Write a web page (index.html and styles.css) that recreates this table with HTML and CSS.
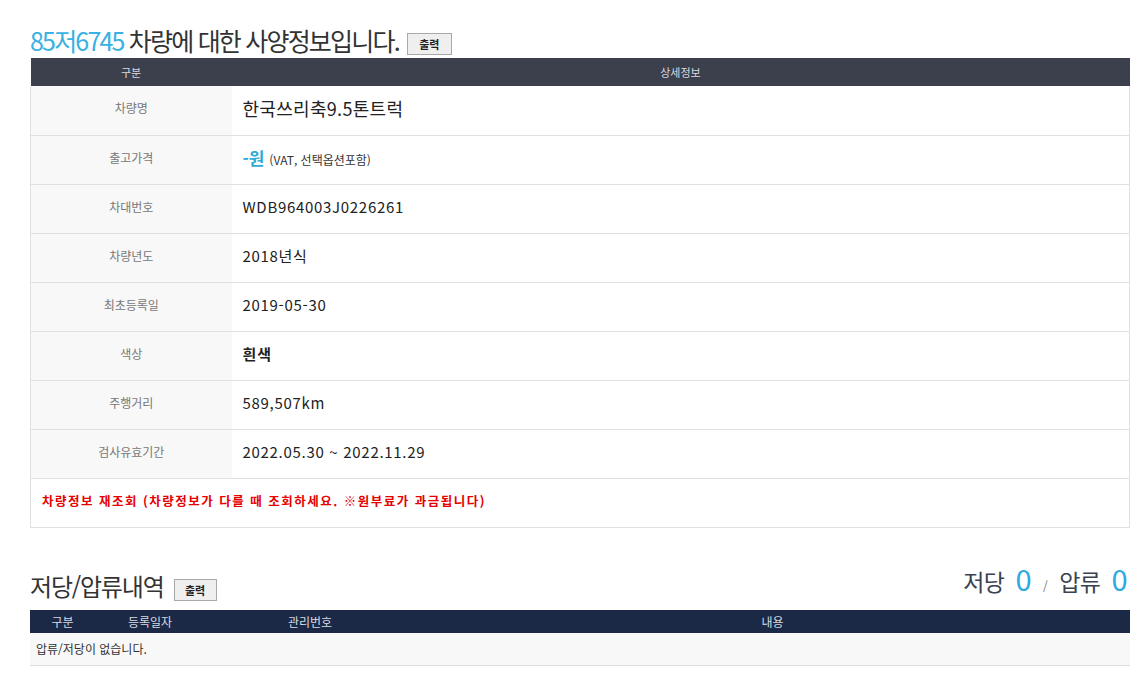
FILE: index.html
```html
<!DOCTYPE html>
<html lang="ko">
<head>
<meta charset="utf-8">
<link rel="stylesheet" href="styles.css">
</head>
<body>
<div class="wrap">
  <div class="title-row">
    <h1 class="title"><span class="plate">85저6745</span> 차량에 대한 사양정보입니다.</h1>
    <button class="print-btn">출력</button>
  </div>
  <table class="spec">
    <thead>
      <tr><th class="col-label">구분</th><th>상세정보</th></tr>
    </thead>
    <tbody>
      <tr><td class="label">차량명</td><td class="value name">한국쓰리축9.5톤트럭</td></tr>
      <tr><td class="label">출고가격</td><td class="value"><span class="price">-원</span> <span class="vat">(VAT, 선택옵션포함)</span></td></tr>
      <tr><td class="label">차대번호</td><td class="value">WDB964003J0226261</td></tr>
      <tr><td class="label">차량년도</td><td class="value">2018년식</td></tr>
      <tr><td class="label">최초등록일</td><td class="value">2019-05-30</td></tr>
      <tr><td class="label">색상</td><td class="value bold">흰색</td></tr>
      <tr><td class="label">주행거리</td><td class="value">589,507km</td></tr>
      <tr><td class="label">검사유효기간</td><td class="value">2022.05.30 ~ 2022.11.29</td></tr>
      <tr><td class="notice" colspan="2">차량정보 재조회 (차량정보가 다를 때 조회하세요. ※원부료가 과금됩니다)</td></tr>
    </tbody>
  </table>

  <div class="sec-row">
    <div class="sec-left">
      <h2 class="sec-title">저당/압류내역</h2>
      <button class="print-btn small">출력</button>
    </div>
    <div class="stats">저당 <span class="num">0</span> <span class="slash">/</span> 압류 <span class="num">0</span></div>
  </div>
  <table class="lien">
    <thead>
      <tr><th class="c1">구분</th><th class="c2">등록일자</th><th class="c3">관리번호</th><th>내용</th></tr>
    </thead>
    <tbody>
      <tr><td colspan="4" class="empty">압류/저당이 없습니다.</td></tr>
    </tbody>
  </table>
</div>
</body>
</html>
```

FILE: styles.css
```css
* { box-sizing: border-box; }
body {
  margin: 0;
  background: #fff;
  font-family: "Noto Sans CJK KR", "Noto Sans", sans-serif;
  color: #333;
}
.wrap {
  width: 1100px;
  margin-left: 30px;
  padding-top: 16px;
}
.title-row {
  display: flex;
  align-items: flex-end;
  gap: 8px;
  height: 42px;
}
.title {
  margin: 0;
  font-size: 25px;
  font-weight: 400;
  letter-spacing: -1.8px;
  line-height: 36px;
  color: #333;
}
.plate { color: #39b1e2; }
.print-btn {
  font-family: "Noto Sans CJK KR", sans-serif;
  font-size: 11px;
  font-weight: 700;
  color: #222;
  background: #efefef;
  border: 1px solid #a9a9a9;
  height: 22px;
  width: 45px;
  padding: 0;
  margin-bottom: 3px;
  line-height: 18px;
}
.print-btn.small { width: 43px; }

table { border-collapse: collapse; width: 1100px; }
.spec thead th {
  background: #3b404c;
  color: #d8dbe0;
  font-size: 11px;
  font-weight: 400;
  height: 28px;
  padding: 0;
  text-align: center;
}
.spec .col-label { width: 201px; }
.spec tbody td {
  height: 49px;
  border-bottom: 1px solid #e0e0e0;
  padding: 0 0 5px 0;
}
.spec tbody tr td:first-child { border-left: 1px solid #e0e0e0; }
.spec tbody tr td:last-child { border-right: 1px solid #e0e0e0; }
.label {
  background: #f8f8f8;
  text-align: center;
  font-size: 12px;
  color: #777;
  width: 201px;
}
.value {
  padding-left: 11px !important;
  font-size: 15px;
  color: #222;
  letter-spacing: 0.7px;
}
.value.name { font-size: 18px; letter-spacing: 0.3px; }
.value.bold { font-weight: 700; letter-spacing: 1px; }
.price { color: #2fa9d9; font-size: 17px; font-weight: 700; letter-spacing: 0; }
.vat { font-size: 12px; color: #333; letter-spacing: 0; }
.notice {
  padding: 0 0 5px 11px !important;
  color: #e60000;
  font-size: 12.5px;
  font-weight: 700;
  letter-spacing: 1.5px;
}

.sec-row {
  display: flex;
  justify-content: space-between;
  align-items: flex-end;
  margin-top: 36px;
  height: 40px;
  padding-right: 3px;
}
.sec-left { display: flex; align-items: flex-end; gap: 10px; }
.sec-title {
  margin: 0;
  font-size: 24px;
  font-weight: 400;
  letter-spacing: -1.2px;
  line-height: 36px;
  color: #333;
}
.stats {
  font-size: 23px;
  color: #3a4150;
  line-height: 36px;
  letter-spacing: -0.5px;
}
.stats .num { color: #2fa9e0; font-size: 29px; margin-left: 5px; }
.stats .slash { font-size: 12px; color: #777; margin: 0 6px; }

.lien { margin-top: 6px; }
.lien thead th {
  background: #1b2846;
  color: #d8dce4;
  font-size: 12px;
  font-weight: 400;
  height: 23px;
  padding: 0;
  text-align: center;
}
.lien .c1 { width: 65px; }
.lien .c2 { width: 110px; }
.lien .c3 { width: 210px; }
.empty {
  background: #f8f8f8;
  height: 33px;
  font-size: 12px;
  color: #333;
  padding: 0 0 0 6px;
  border-bottom: 1px solid #ddd;
}
```
